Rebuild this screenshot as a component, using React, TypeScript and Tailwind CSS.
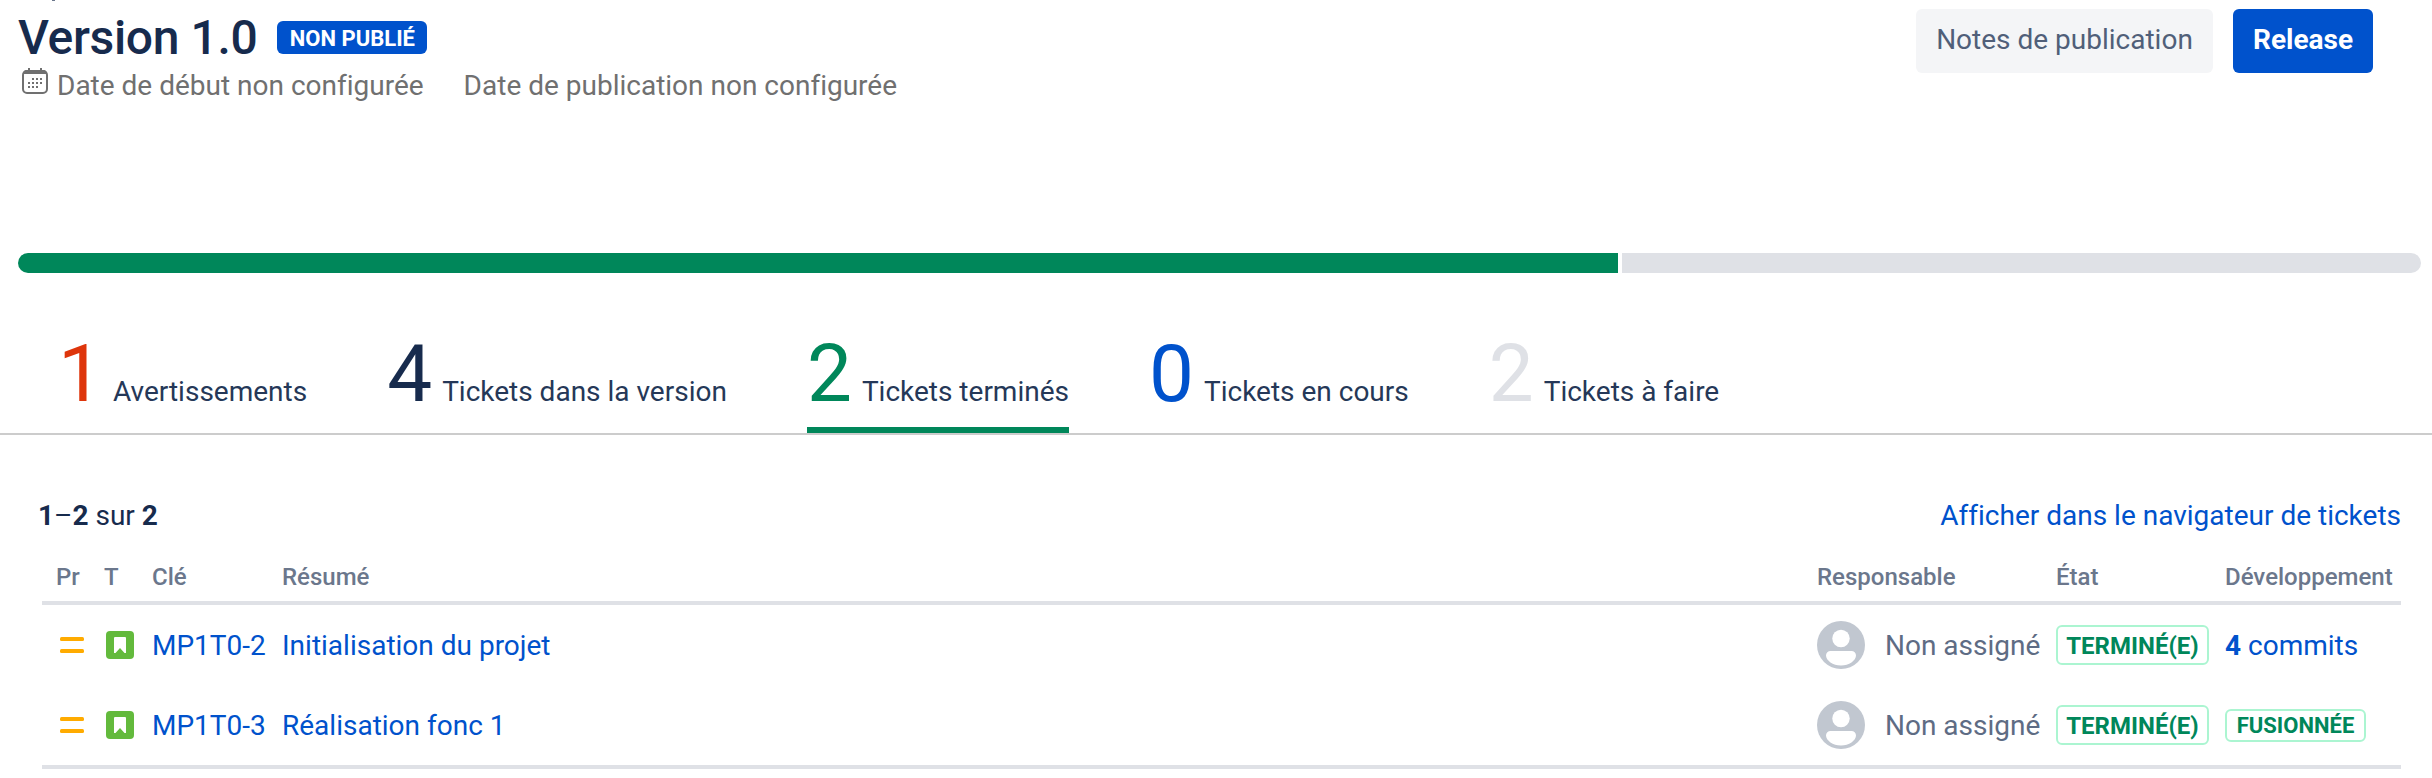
const STATS = [
  { value: 1, label: "Avertissements", color: "text-[#de350b]" },
  { value: 4, label: "Tickets dans la version", color: "text-[#172b4d]" },
  { value: 2, label: "Tickets terminés", color: "text-[#00875a]", active: true },
  { value: 0, label: "Tickets en cours", color: "text-[#0052cc]" },
  { value: 2, label: "Tickets à faire", color: "text-[#dfe1e6]" },
];

const ISSUES = [
  { key: "MP1T0-2", summary: "Initialisation du projet", commits: 4 },
  { key: "MP1T0-3", summary: "Réalisation fonc 1", commits: 0 },
];

const COLUMNS = "grid grid-cols-[48px_48px_130px_1535px_239px_169px_1fr] pl-[14px]";

function CalendarIcon() {
  return (
    <svg width="26" height="27" viewBox="0 0 26 27" className="shrink-0">
      <rect x="1" y="3" width="24" height="22" rx="4" fill="none" stroke="#707070" strokeWidth="2" />
      <path d="M1 6a4 4 0 0 1 4-4h16a4 4 0 0 1 4 4H1zM6 0h2v3H6zM18 0h2v3h-2z" fill="#707070" />
      <g fill="#707070">
        {[10, 14, 18].map((y) =>
          [6, 10, 14, 18].map((x) =>
            (y === 10 && x === 6) || (y === 18 && x === 18) ? null : (
              <rect key={`${x}-${y}`} x={x} y={y} width="2" height="2" />
            ),
          ),
        )}
      </g>
    </svg>
  );
}

function PriorityIcon() {
  return (
    <svg width="32" height="32" viewBox="0 0 32 32">
      <rect x="4" y="8" width="24" height="4" rx="1.5" fill="#ffab00" />
      <rect x="4" y="20" width="24" height="4" rx="1.5" fill="#ffab00" />
    </svg>
  );
}

function StoryIcon() {
  return (
    <svg width="32" height="32" viewBox="0 0 32 32">
      <rect x="2" y="2" width="28" height="28" rx="4" fill="#63ba3c" />
      <path d="M10 9a1 1 0 0 1 1-1h10a1 1 0 0 1 1 1v15h-1.500l-4.500-5-4.500 5H10z" fill="#fff" />
    </svg>
  );
}

function Avatar() {
  return (
    <svg width="48" height="48" viewBox="0 0 48 48" className="shrink-0">
      <circle cx="24" cy="24" r="24" fill="#c1c7d0" />
      <circle cx="24" cy="17.500" r="8.700" fill="#fff" />
      <path d="M9 34.500a4.500 4.500 0 0 1 4.500-4.500h21a4.500 4.500 0 0 1 4.500 4.500C39 39.500 32 44.500 24 44.500S9 39.500 9 34.500z" fill="#fff" />
    </svg>
  );
}

export default function App() {
  return (
    <div className="relative h-[778px] w-[2432px] overflow-hidden bg-white font-['Roboto',sans-serif] text-[28px] leading-[40px] text-[#172b4d] [font-variant-ligatures:none]">
      <div className="absolute top-0 left-[52px] h-px w-[3px] bg-[#6b778c]" />
      <header className="flex h-[253px] items-start justify-between pl-[18px]">
        <div>
          <div className="flex h-[66px] items-start gap-[20px]">
            <h1 className="pt-[10px] text-[48px] leading-[56px] font-medium tracking-[-0.36px]">Version 1.0</h1>
            <span className="mt-[21px] flex h-[33px] w-[150px] items-center justify-center rounded-[6px] bg-[#0052cc] pt-[2px] text-[22px] leading-none font-bold text-white">
              NON PUBLIÉ
            </span>
          </div>
          <div className="flex h-[40px] items-start pl-[4px] text-[#707070]">
            <div className="flex items-start pt-[2px]">
              <CalendarIcon />
            </div>
            <span className="ml-[9px]">Date de début non configurée</span>
            <span className="ml-[40px]">Date de publication non configurée</span>
          </div>
        </div>
        <div className="flex gap-[20px] pt-[9px] pr-[59px]">
          <button className="h-[64px] w-[297px] rounded-[6px] bg-[#f4f5f7] pb-[2px] text-[#505f79]">Notes de publication</button>
          <button className="h-[64px] w-[140px] rounded-[6px] bg-[#0052cc] pb-[2px] font-bold text-white">Release</button>
        </div>
      </header>

      <div className="ml-[18px] flex h-[20px] w-[2403px] gap-[4px]">
        <div className="w-[1600px] rounded-l-[10px] bg-[#00875a]" />
        <div className="flex-1 rounded-r-[10px] bg-[#dfe1e6]" />
      </div>

      <nav className="flex h-[162px] items-end gap-[80px] border-b-2 border-[#cccccc] pl-[58px]">
        {STATS.map((s) => (
          <div
            key={s.label}
            className={`flex h-[99px] items-baseline border-b-6 ${s.active ? "border-[#00875a]" : "border-transparent"}`}
          >
            <span className={`text-[80px] leading-[80px] ${s.color}`}>{s.value}</span>
            <span className="ml-[10px] text-[#253858]">{s.label}</span>
          </div>
        ))}
      </nav>

      <div className="flex h-[120px] items-start justify-between pt-[61px] pr-[31px] pl-[38px]">
        <span>
          <b className="font-bold">1</b>–<b className="font-bold">2</b> sur <b className="font-bold">2</b>
        </span>
        <a className="text-[#0052cc]">Afficher dans le navigateur de tickets</a>
      </div>

      <section className="ml-[42px] w-[2359px]">
        <div className={`${COLUMNS} h-[50px] border-b-4 border-[#dfe1e6] text-[24px] leading-[44px] font-medium text-[#6b778c]`}>
          <span>Pr</span>
          <span>T</span>
          <span>Clé</span>
          <span>Résumé</span>
          <span>Responsable</span>
          <span>État</span>
          <span>Développement</span>
        </div>
        {ISSUES.map((issue) => (
          <div key={issue.key} className={`${COLUMNS} h-[80px] items-center text-[#0052cc]`}>
            <PriorityIcon />
            <StoryIcon />
            <span className="pt-[2px]">{issue.key}</span>
            <span className="pt-[2px]">{issue.summary}</span>
            <span className="flex items-center gap-[20px] whitespace-nowrap text-[#5e6c84]">
              <Avatar />
              <span className="pt-[2px]">Non assigné</span>
            </span>
            <span className="flex h-[40px] w-[153px] items-center justify-center rounded-[6px] border-2 border-[#abf5d1] pt-[2px] text-[24px] leading-none font-bold text-[#00875a]">
              TERMINÉ(E)
            </span>
            {issue.commits > 0 ? (
              <span className="pt-[2px]">
                <b className="font-bold">{issue.commits}</b> commits
              </span>
            ) : (
              <span className="flex h-[33px] w-[141px] items-center justify-center rounded-[6px] border-2 border-[#abf5d1] pt-[2px] text-[22px] leading-none font-bold text-[#00875a]">
                FUSIONNÉE
              </span>
            )}
          </div>
        ))}
        <div className="h-[4px] bg-[#dfe1e6]" />
      </section>
    </div>
  );
}
